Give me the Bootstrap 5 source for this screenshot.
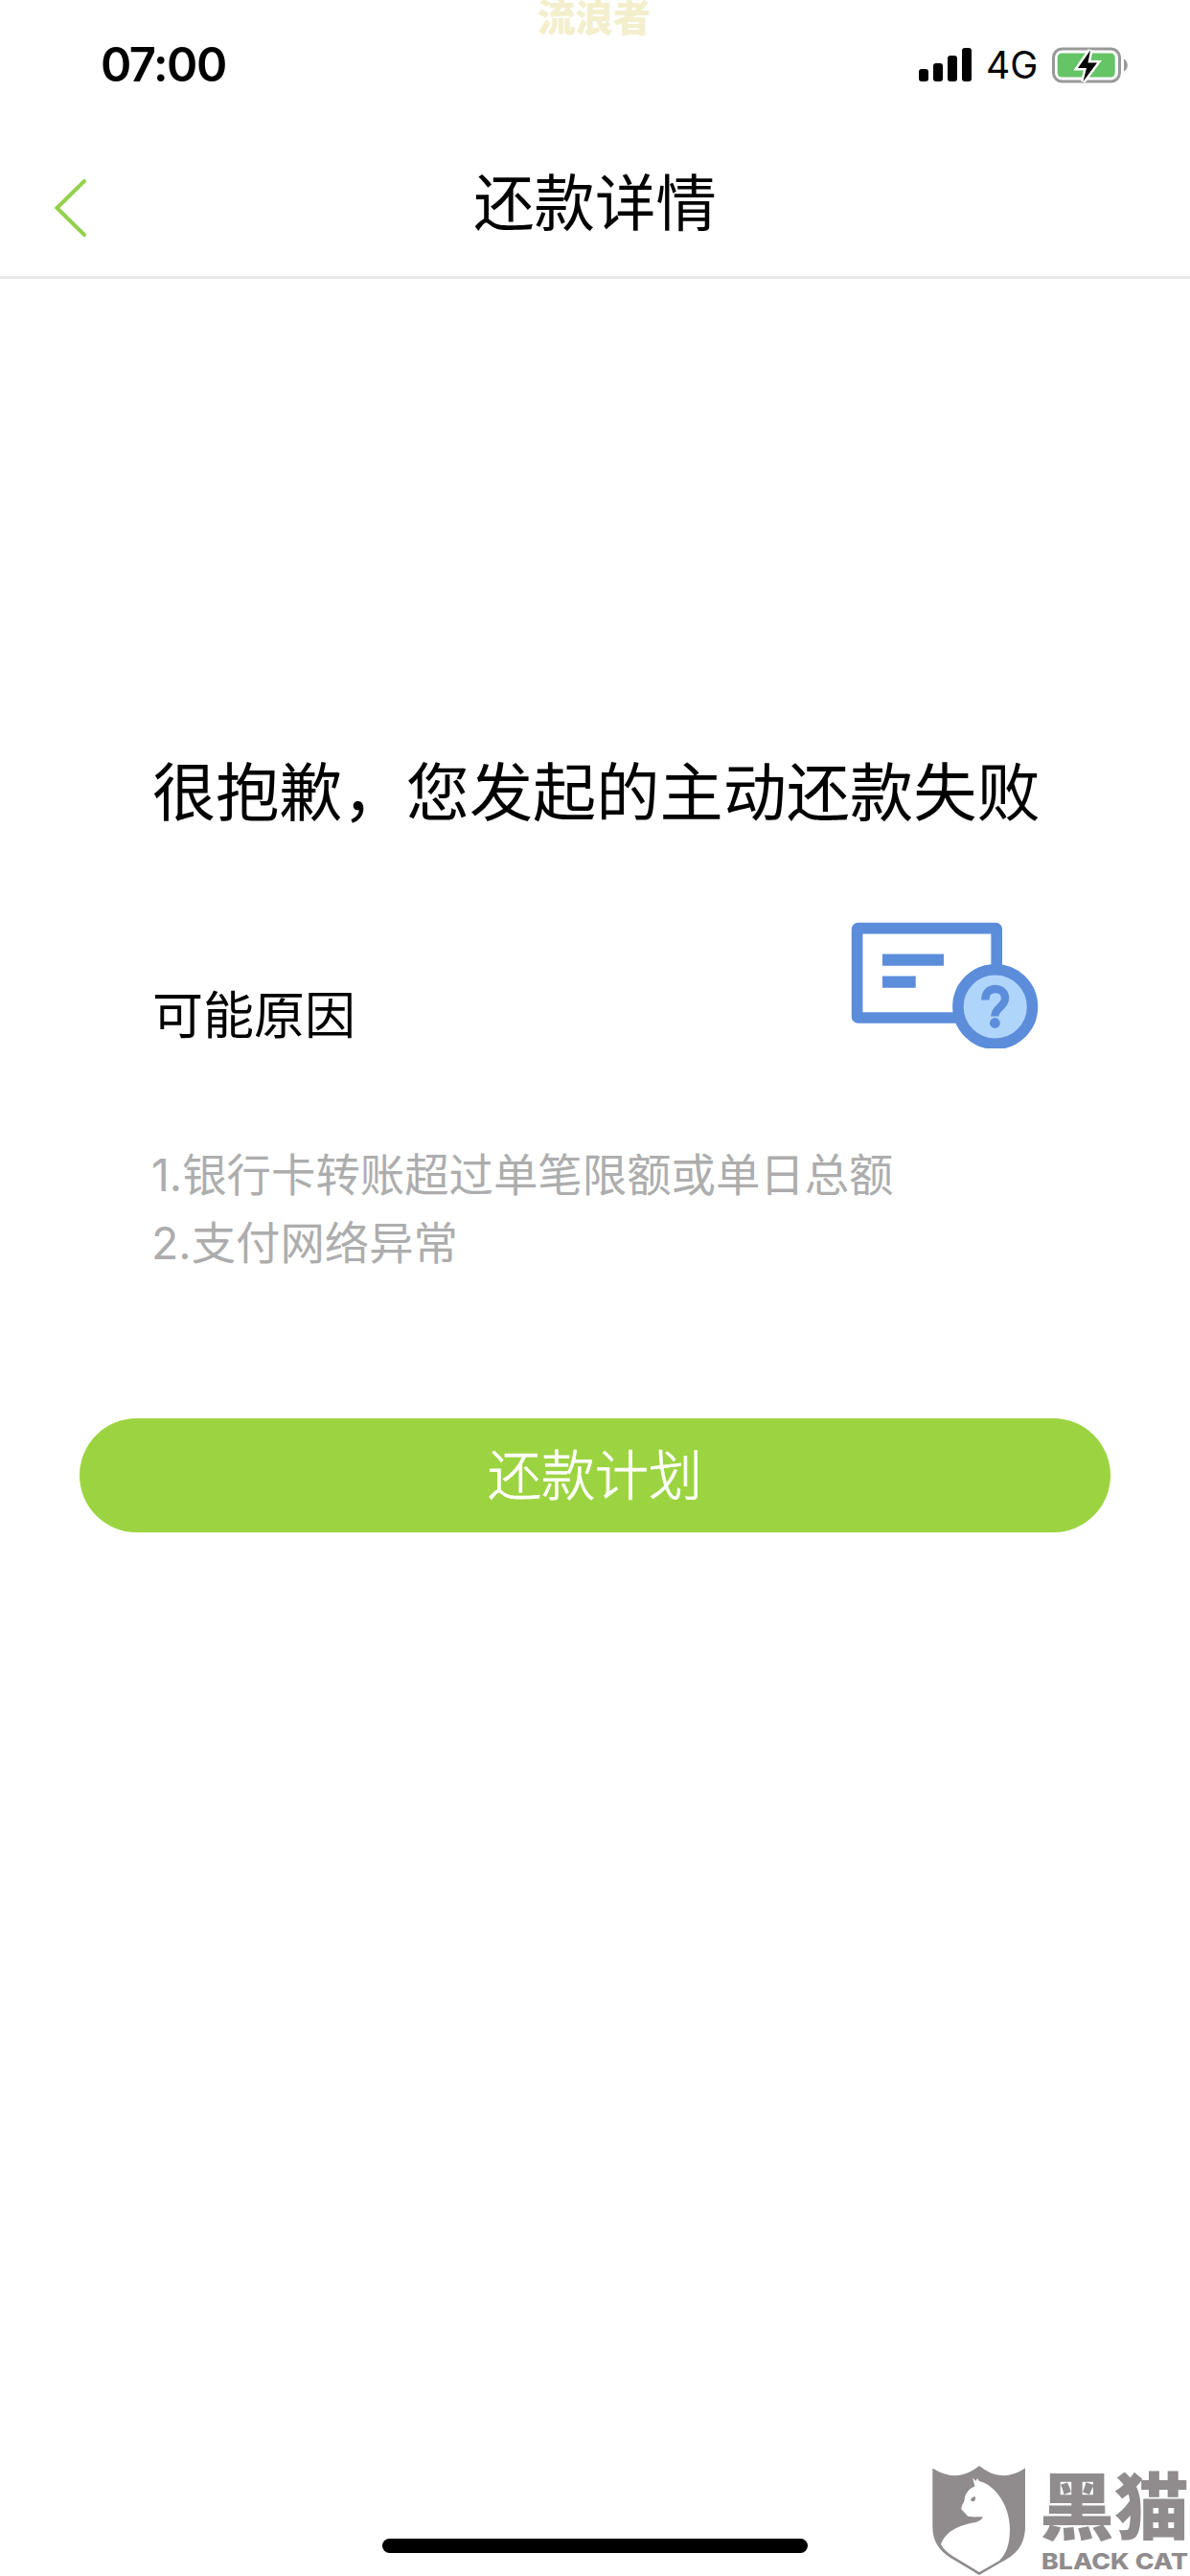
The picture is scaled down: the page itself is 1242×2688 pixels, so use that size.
<!DOCTYPE html>
<html lang="zh-CN">
<head>
  <meta charset="UTF-8" />
  <meta name="viewport" content="width=device-width, initial-scale=1.0"/>
  <title>还款详情</title>
  <link href="https://cdn.jsdelivr.net/npm/bootstrap@5.3.3/dist/css/bootstrap.min.css" rel="stylesheet"/>
  <style>
    body {
      font-family: Inter, "Noto Sans CJK SC", sans-serif;
      color: #000;
    }
    .screen { height: 2688px; overflow: hidden; }

    /* status bar */
    .status-bar { height: 136px; padding: 0 65px 0 105px; }
    .clock { font-size: 49px; font-weight: 600; line-height: 138px; letter-spacing: -1.5px; }
    .network { font-size: 39px; line-height: 138px; margin-left: 13px; width: 68px; }
    .nickname {
      left: 561px;
      top: 0;
      font-size: 39.5px;
      font-weight: 900;
      line-height: 38px;
      color: #f3efcc;
    }

    /* title bar */
    .title-bar { height: 155px; border-bottom: 3px solid #e8e8e8; padding: 0 55px; }
    .side { width: 120px; }
    .page-title { font-size: 63.4px; line-height: 150px; }

    .result { padding: 492px 155px 0 159px; }
    .result-title { font-size: 66.2px; line-height: 88px; }
    .reason-row { margin-top: 89px; height: 134px; }
    .reason-title { font-size: 53px; line-height: 76px; padding-top: 62px; }
    .reasons { margin: 97px 0 0 -1px; font-size: 46.4px; line-height: 71px; color: #adadad; }

    .btn-plan {
      margin: 147px 83px 0;
      height: 119px;
      font-size: 56px;
      font-weight: 300;
      -webkit-text-stroke: 0.8px #fff;
      color: #fff;
      background: #9cd441;
    }
    .home-bar { width: 444px; height: 15px; margin-bottom: 24px; background: #000; }

    /* corner stamp */
    .stamp { right: 0; bottom: 0; width: 300px; height: 140px; color: #908c8d; }
  </style>
</head>
<body class="bg-white">
  <div class="screen position-relative d-flex flex-column">
    <div class="nickname position-absolute text-nowrap">流浪者</div>

    <div class="status-bar d-flex align-items-center justify-content-between">
      <div class="clock">07:00</div>
      <div class="d-flex align-items-center">
        <svg width="57" height="36" viewBox="0 0 57 36">
          <rect x="0" y="22" width="10" height="13" rx="3"/>
          <rect x="15" y="16" width="10" height="19" rx="3"/>
          <rect x="30" y="8" width="10" height="27" rx="3"/>
          <rect x="45" y="0" width="10" height="35" rx="3"/>
        </svg>
        <div class="network">4G</div>
        <svg width="80" height="40" viewBox="0 0 80 40">
          <rect x="2.5" y="3" width="69" height="34" rx="9" fill="none" stroke="#999" stroke-width="3"/>
          <rect x="6.7" y="7.5" width="60" height="25" rx="4.5" fill="#65c466"/>
          <path d="M76 13.5c5 2.5 5 11 0 13z" fill="#999"/>
          <path d="M41 4.5 28 23h9l-3.5 14L48 17.500h-9.500z" fill="#000" stroke="#fff" stroke-width="5" paint-order="stroke"/>
        </svg>
      </div>
    </div>

    <div class="title-bar d-flex align-items-center justify-content-between">
      <div class="side">
        <svg class="d-block mt-2" width="40" height="64" viewBox="0 0 40 64">
          <path d="M33 5 4.500 33 33 61" fill="none" stroke="#93d14c" stroke-width="4" stroke-linecap="round"/>
        </svg>
      </div>
      <div class="page-title">还款详情</div>
      <div class="side"></div>
    </div>

    <div class="result">
      <div class="result-title text-nowrap">很抱歉，您发起的主动还款失败</div>
      <div class="reason-row d-flex justify-content-between">
        <div class="reason-title">可能原因</div>
        <svg width="200" height="134" viewBox="887 960.500 200 134">
          <rect x="894.6" y="969.2" width="145.600" height="93.300" rx="1" fill="#fff" stroke="#5c8ddb" stroke-width="11.700" stroke-linejoin="round"/>
          <path d="M921 1002.200h64M921 1025.200h34.700" stroke="#5c8ddb" stroke-width="12.300"/>
          <circle cx="1038.700" cy="1051" r="38.800" fill="#b0d5fb" stroke="#5c8ddb" stroke-width="11.500"/>
          <path d="M1028.300 1044c0-7 4-11.500 10.200-11.500s10.500 4 10.500 9.500c0 9-10.700 10-10.700 19" fill="none" stroke="#5c8ddb" stroke-width="8.300"/>
          <circle cx="1038.400" cy="1068" r="5.400" fill="#5c8ddb"/>
        </svg>
      </div>
      <div class="reasons">
        <div>1.银行卡转账超过单笔限额或单日总额</div>
        <div>2.支付网络异常</div>
      </div>
    </div>

    <button type="button" class="btn btn-plan rounded-pill border-0 p-0">还款计划</button>

    <div class="home-bar rounded-pill mt-auto mx-auto"></div>

    <svg class="stamp position-absolute" viewBox="0 0 300 140" fill="currentColor">
      <path d="M31.300 27.500Q57 44 80 25Q103 44 128 27.500V88C128 108 118 118 104 125L80 139 50 121C38 113 31.300 104 31.300 88z"/>
      <path fill="#fff" d="M73 37.500 76.500 41 78 38 80 41C97 45 112 67 112 91C112 107 108 117 101 124L80 136 52 119C46 115 42 111 40 107C45 93 59 87 76 84Q82 82 84 78.500C77 78 72 79 68 77.500Q64 73 61.500 70.500C61 67 63 65 64.500 61.500C65 54 69 49 75.500 46.500z"/>
      <path d="M71 60q2-3 5-3v3q-1 3-4 2z"/>
      <text x="143" y="96" font-size="76" font-weight="900" textLength="156" lengthAdjust="spacingAndGlyphs">黑猫</text>
      <text x="145" y="132.500" font-size="23" font-weight="800" textLength="153" lengthAdjust="spacingAndGlyphs">BLACK CAT</text>
    </svg>
  </div>

  <script src="https://cdn.jsdelivr.net/npm/bootstrap@5.3.3/dist/js/bootstrap.bundle.min.js"></script>
</body>
</html>
